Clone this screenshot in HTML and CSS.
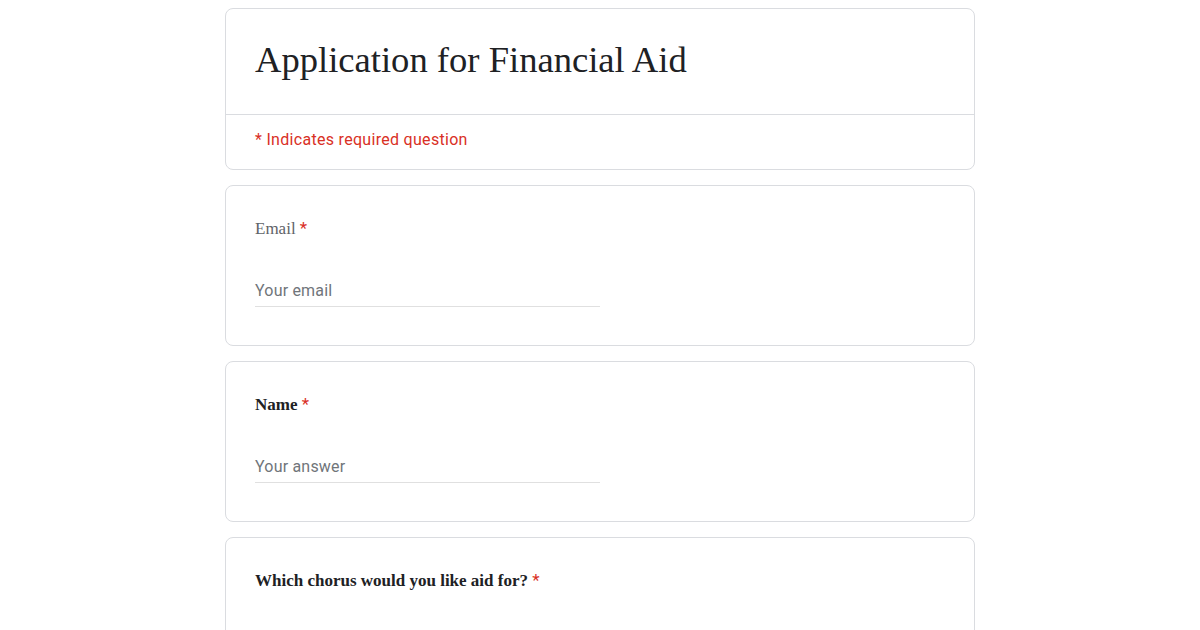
FILE: index.html
```html
<!DOCTYPE html>
<html>
<head>
<meta charset="utf-8">
<link rel="stylesheet" href="styles.css">
</head>
<body>
<div class="form">
  <div class="card header">
    <div class="header-top">
      <h1 class="title">Application for Financial Aid</h1>
    </div>
    <div class="header-bottom">
      <span class="required-note">* Indicates required question</span>
    </div>
  </div>
  <div class="card question">
    <div class="label label-email">Email <span class="star">*</span></div>
    <div class="input"><span class="placeholder">Your email</span></div>
  </div>
  <div class="card question">
    <div class="label label-bold">Name <span class="star">*</span></div>
    <div class="input"><span class="placeholder">Your answer</span></div>
  </div>
  <div class="card question">
    <div class="label label-bold">Which chorus would you like aid for? <span class="star">*</span></div>
  </div>
</div>
</body>
</html>
```
FILE: styles.css
```css
html, body {
  margin: 0;
  padding: 0;
  background: #ffffff;
}
body {
  font-family: Roboto, "Liberation Sans", sans-serif;
  color: #202124;
}
.form {
  width: 750px;
  margin: 8px auto 0;
  display: flex;
  flex-direction: column;
  gap: 15px;
}
.card {
  box-sizing: border-box;
  border: 1px solid #dadce0;
  border-radius: 8px;
  background: #fff;
}
.header-top {
  height: 106px;
  box-sizing: border-box;
  padding: 27px 29px 0;
  border-bottom: 1px solid #dadce0;
}
.title {
  margin: 0;
  font-family: "Liberation Serif", serif;
  font-weight: normal;
  font-size: 36.6px;
  line-height: 48px;
  height: 48px;
  color: #202124;
}
.header-bottom {
  height: 54px;
  box-sizing: border-box;
  padding: 15px 29px 0;
  line-height: 20px;
}
.required-note {
  color: #d93025;
  font-size: 16px;
  letter-spacing: 0.3px;
}
.question {
  height: 161px;
  padding: 31px 29px 0;
}
.label {
  font-family: "Liberation Serif", serif;
  font-size: 17px;
  line-height: 24px;
  height: 24px;
}
.label-email {
  color: #5f6368;
}
.label-bold {
  font-weight: bold;
  color: #202124;
}
.star {
  color: #d93025;
  font-family: Roboto, sans-serif;
  font-weight: normal;
  line-height: 1;
}
.input {
  margin-top: 38px;
  width: 345px;
  height: 24px;
  padding-bottom: 3px;
  border-bottom: 1px solid #e0e0e0;
  line-height: 24px;
}
.placeholder {
  font-size: 16px;
  letter-spacing: 0.2px;
  color: #70757a;
}
```
